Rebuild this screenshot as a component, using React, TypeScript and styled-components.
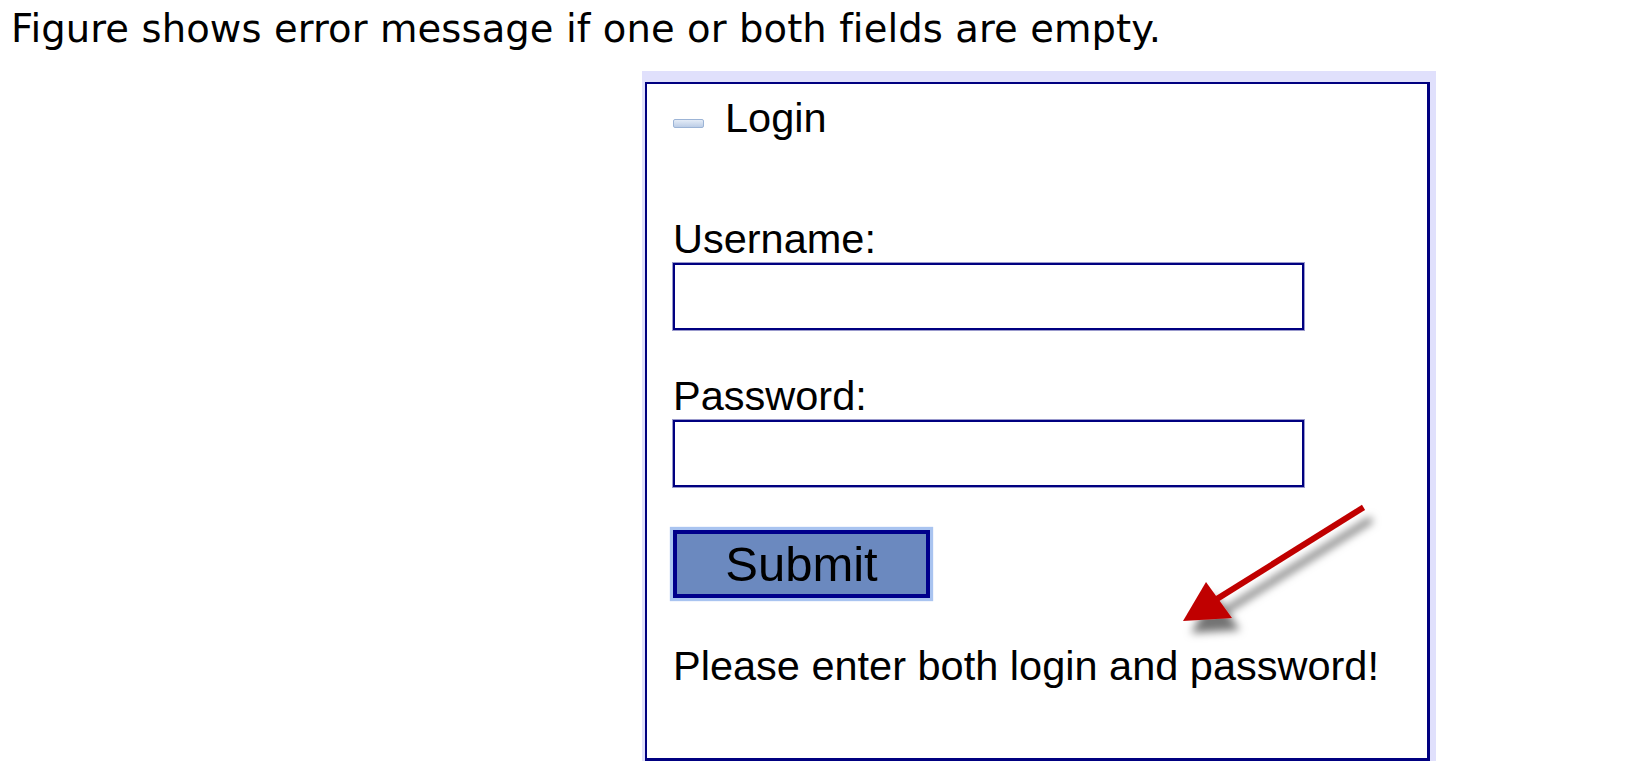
import React from 'react';
import styled, { createGlobalStyle } from 'styled-components';

/* ─────────────────────────── global ─────────────────────────── */
const GlobalStyle = createGlobalStyle`
  body {
    margin: 0;
    background: #ffffff;
  }
`;

/* ─────────────────────────── styled components ─────────────────────────── */
const Caption = styled.p`
  margin: 7px 0 0 11px;
  font-family: "DejaVu Sans", Verdana, sans-serif;
  font-size: 38.5px;
  letter-spacing: 0.1px;
  line-height: 43px;
  color: #000;
`;

const Figure = styled.div`
  position: relative;
  box-sizing: border-box;
  width: 794px;
  margin: 21px 0 0 642px;
  padding: 11px 6px 0 3px;
  background: #e0e0fc;
`;

const Panel = styled.form`
  box-sizing: border-box;
  display: flex;
  flex-direction: column;
  align-items: flex-start;
  padding: 11px 0 69px 26px;
  background: #fff;
  border-style: solid;
  border-color: #000080;
  border-width: 2px 3px 3px 2px;
  font-family: "Liberation Sans", Arial, sans-serif;
  font-size: 41.5px;
  line-height: 46px;
  color: #000;
`;

const Header = styled.div`
  display: flex;
  align-items: center;
  gap: 21px;
  height: 46px;
`;

const CollapseIcon = styled.span`
  box-sizing: border-box;
  width: 31px;
  height: 9px;
  margin-top: 10px;
  border: 1.5px solid #9cb4d6;
  border-radius: 2px;
  background: linear-gradient(#e4ecf7, #bccde6);
`;

const Label = styled.label<{ $gap: number }>`
  display: block;
  margin-top: ${(p) => p.$gap}px;
`;

const Field = styled.input`
  box-sizing: border-box;
  width: 631px;
  height: 67px;
  margin: 1px 0 0;
  padding: 0 8px;
  border: 2px solid #000080;
  box-shadow: 0 0 0 1px rgba(0, 0, 128, 0.4);
  background: #fff;
  font: inherit;
  outline: none;
`;

const SubmitButton = styled.button`
  box-sizing: border-box;
  width: 257px;
  height: 68px;
  margin-top: 43px;
  padding: 0;
  border: 4px solid #00008b;
  background: #6b89bf;
  box-shadow: 0 0 1px 3px #a9c4f0;
  font-family: "Liberation Sans", Arial, sans-serif;
  font-size: 49px;
  line-height: 1;
  color: #000;
  cursor: pointer;
`;

const ErrorText = styled.div`
  margin-top: 45px;
`;

const Pointer = styled.svg`
  position: absolute;
  left: 508px;
  top: 419px;
  width: 240px;
  height: 150px;
  overflow: visible;
  pointer-events: none;
`;

/* ───────────────────────────── component ───────────────────────────── */
const App: React.FC = () => (
  <>
    <GlobalStyle />
    <Caption>Figure shows error message if one or both fields are empty.</Caption>

    <Figure>
      <Panel onSubmit={(e) => e.preventDefault()}>
        <Header>
          <CollapseIcon />
          <span>Login</span>
        </Header>

        <Label $gap={75} htmlFor="username">Username:</Label>
        <Field id="username" type="text" />

        <Label $gap={43} htmlFor="password">Password:</Label>
        <Field id="password" type="password" />

        <SubmitButton type="submit">Submit</SubmitButton>

        <ErrorText>Please enter both login and password!</ErrorText>
      </Panel>

      {/* red call-out arrow pointing at the message */}
      <Pointer viewBox="0 0 240 150">
        <defs>
          <filter id="arrowShadow" x="-20%" y="-20%" width="150%" height="160%">
            <feDropShadow dx="8" dy="12" stdDeviation="4.5" floodColor="#000" floodOpacity="0.55" />
          </filter>
        </defs>
        <g filter="url(#arrowShadow)">
          <line x1="211" y1="19" x2="62" y2="112" stroke="#c00000" strokeWidth="6" strokeLinecap="square" />
          <polygon points="33,131 56,92 82,128" fill="#c00000" />
        </g>
      </Pointer>
    </Figure>
  </>
);

export default App;
